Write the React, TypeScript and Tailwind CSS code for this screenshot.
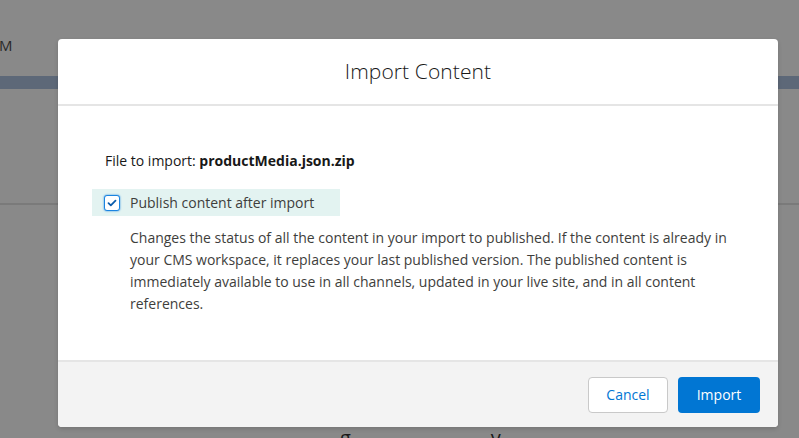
import React from "react";

export default function App() {
  const font = { fontFamily: '"Open Sans", "Noto Sans", sans-serif' };
  return (
    <div className="relative w-[799px] h-[438px] overflow-hidden bg-[#898989]" style={font}>
      {/* background page */}
      <div className="flex flex-col w-full h-full">
        <div className="h-[76px] flex items-start">
          <span className="mt-[34px] -ml-[1px] text-[15px] text-[#2a2a2a]">M</span>
        </div>
        <div className="h-[13px] bg-[#5d6878]" />
        <div className="h-[114px]" />
        <div className="h-[2px] bg-[#7a7a7a]" />
        <div className="flex-1 flex items-end">
          <span className="ml-[340px] mb-[-14px] text-[20px] leading-[28px] text-[#1a1a1a]">g</span>
          <span className="ml-[140px] mb-[-14px] text-[20px] leading-[28px] text-[#1a1a1a]">y</span>
        </div>
      </div>

      {/* modal */}
      <div className="absolute left-[58px] top-[39px] w-[720px] h-[388px] bg-white rounded-[4px] flex flex-col overflow-hidden shadow-[0_2px_4px_rgba(0,0,0,0.15)]">
        <div className="h-[67px] shrink-0 flex items-center justify-center border-b-2 border-[#e5e5e5]">
          <h2 className="text-[21px] font-light text-[#181818] tracking-[0.1px]">Import Content</h2>
        </div>
        <div className="flex-1 pt-[45px] pl-[34px] pr-[30px]">
          <p className="text-[14px] text-[#181818] pl-[13px] leading-[20px]">
            File to import: <span className="font-bold">productMedia.json.zip</span>
          </p>
          <div className="mt-[18px] w-[248px] h-[27px] bg-[#e3f3f1] flex items-center pl-[12px]">
            <span className="w-[16px] h-[16px] rounded-[3px] border border-[#1b84e0] bg-white flex items-center justify-center shadow-[0_0_2px_#1b84e0]">
              <svg width="10" height="8" viewBox="0 0 10 8">
                <path d="M1.5 4.2 L3.8 6.3 L8.5 1.6" stroke="#0b5cab" strokeWidth="1.8" fill="none" strokeLinecap="round" strokeLinejoin="round" />
              </svg>
            </span>
            <span className="ml-[10px] text-[14px] text-[#3e3e3c]">Publish content after import</span>
          </div>
          <p className="mt-[11px] ml-[38px] text-[14px] leading-[22px] text-[#3e3e3c] w-[620px]">
            Changes the status of all the content in your import to published. If the content is already in your CMS workspace, it replaces your last published version. The published content is immediately available to use in all channels, updated in your live site, and in all content references.
          </p>
        </div>
        <div className="h-[67px] shrink-0 bg-[#f3f3f3] border-t-2 border-[#e5e5e5] flex items-center justify-end gap-[10px] pr-[18px]">
          <button className="w-[80px] h-[36px] bg-white border border-[#c9c9c9] rounded-[4px] text-[14px] text-[#0176d3]">Cancel</button>
          <button className="w-[82px] h-[36px] bg-[#0176d3] rounded-[4px] text-[14px] text-white">Import</button>
        </div>
      </div>
    </div>
  );
}
